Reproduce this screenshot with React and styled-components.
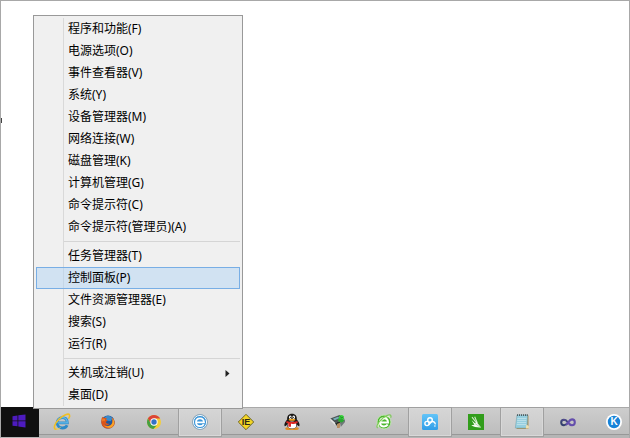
import React from "react";
import styled, { createGlobalStyle } from "styled-components";

const GlobalStyle = createGlobalStyle`
  * { box-sizing: border-box; }
  body { margin: 0; background: #fff; }
  button { font: inherit; color: inherit; cursor: default; }
`;

const Screen = styled.div`
  position: relative;
  display: flex;
  flex-direction: column;
  min-height: 100vh;
  border: 1px solid #a8a8a8;
  border-bottom: 0;
  background: #fff;
  color: #000;
  font: 12px/20px "Noto Sans", "Noto Sans CJK SC", sans-serif;
  overflow: hidden;
`;

const Desktop = styled.main`
  flex: 1;
`;

const EdgeMark = styled.span`
  position: absolute;
  left: -1px;
  top: 117px;
  width: 2px;
  height: 5px;
  background: #444;
`;

const Menu = styled.nav`
  position: absolute;
  left: 32px;
  bottom: 29px;
  width: 210px;
  padding: 2px;
  border: 1px solid #999;
  background: linear-gradient(#d9d9d9, #d9d9d9) 29px 2px / 1px calc(100% - 4px) no-repeat #f0f0f0;
`;

const MenuItem = styled.button`
  display: flex;
  align-items: center;
  justify-content: space-between;
  width: 100%;
  height: 22px;
  padding: 0 8px 0 31px;
  border: 1px solid ${(p) => (p.$active ? "#78aee5" : "transparent")};
  background: ${(p) => (p.$active ? "rgba(178, 212, 243, 0.5)" : "transparent")};
  text-align: left;
  white-space: nowrap;
`;

const Separator = styled.hr`
  height: 1px;
  margin: 3px 0 3px 28px;
  border: 0;
  background: #d5d5d5;
`;

const Taskbar = styled.footer`
  display: flex;
  height: 31px;
  background: linear-gradient(#a9a9a9 0 1px, #cdcdcd 1px, #bdbdbd 27px, #989898 27px 28px, #b5b5b5 28px);
`;

const StartButton = styled.button`
  display: grid;
  place-items: center;
  flex: 0 0 38px;
  height: 30px;
  padding: 0 2px 2px 0;
  border: 0;
  background: #101010;
`;

const TaskList = styled.div`
  display: flex;
  flex: 1;
  padding-left: 1px;
  gap: 2px;
`;

const TaskButton = styled.button`
  display: grid;
  place-items: center;
  flex: 0 0 44px;
  height: 30px;
  padding: 0;
  border: 1px solid ${(p) => (p.$running ? "#a0a0a0" : "transparent")};
  background: ${(p) => (p.$running ? "linear-gradient(#d6d6d6, #c9c9c9)" : "transparent")};
  box-shadow: ${(p) => (p.$running ? "inset 0 0 0 1px #d8d8d8" : "none")};
`;

const Icon = styled.svg`
  display: block;
  width: ${(p) => p.$size || 16}px;
  height: ${(p) => p.$size || 16}px;
  overflow: visible;
`;

const WindowsIcon = () => (
  <Icon $size={14} viewBox="0 0 14 14" fill="#4d1bbf">
    <path d="M.5 2.2 5.5 1.5V6.5H.5zM6.3 1.3 13.5 .4V6.5H6.3zM.5 7.3H5.5V12.3L.5 11.7zM6.3 7.3H13.5V13.6L6.3 12.6z" />
  </Icon>
);

const ExplorerIcon = () => (
  <Icon viewBox="0 0 16 16" fill="none">
    <path d="M3.2 8.8H13.3C13.2 5.7 11.3 3.7 8.5 3.7C5.4 3.7 3.1 5.9 3.1 8.8C3.1 11.8 5.4 14 8.5 14C10.8 14 12.5 12.9 13.1 11.3" stroke="#2c8ac9" strokeWidth="2.8" />
    <path d="M4 8.8H13.3C13.2 5.7 11.3 3.7 8.5 3.7C5.4 3.7 3.1 5.9 3.1 8.8" stroke="#62baea" strokeWidth="1.3" />
    <path d="M2.2 15.3C-1.3 15.2.5 9.4 5.2 5C9.5 .9 14.6-1 15.5 1C15.9 1.9 15.4 3.4 14.9 4.2" stroke="#f0bf22" strokeWidth="1.6" strokeLinecap="round" />
    <path d="M2.2 15.3C4 15.3 5.6 14.2 6.5 13.5" stroke="#f5cf45" strokeWidth="1" />
  </Icon>
);

const FirefoxIcon = () => (
  <Icon $size={14} viewBox="0 0 16 16">
    <circle cx="8" cy="8" r="7.5" fill="#20599e" />
    <path d="M4 3C6 0 11 0 13 4L11 7L5 6z" fill="#3b8ccc" />
    <path d="M1.6 2C2 3 3 3.2 4 3.4C5 3 6 3.3 6.6 3.9L5.8 5.3L7.7 6.3L5.6 7.8C5.4 9.5 7.4 10.5 9.6 9.6C9 12.3 5 12 4.2 9.8C4.8 13.3 11.8 13.8 12.8 8.7C13.2 6.7 12.8 4.2 12 2.5C14.6 4 16 6.7 15.6 10C14.2 17.2 1.8 17.5.4 9C0 6.3.5 3.8 1.6 2z" fill="#dc5419" />
    <path d="M13 3.3C15.8 6.5 15.9 11 12.7 13.6C9.4 15.8 5 14.3 2.6 11.5C6.5 14 12.3 13 13.1 8.7C13.4 7 13.4 5 13 3.3z" fill="#f8a528" />
    <path d="M1.3 4.5C3 3.7 4.4 4.3 4.8 5.3L4 7.3C3.4 6.3 2 6.5 1 8z" fill="#ed7b24" />
  </Icon>
);

const ChromeIcon = () => (
  <Icon $size={14} viewBox="0 0 16 16">
    <circle cx="8" cy="8" r="8" fill="#f4ce38" />
    <path d="M8 0C11 0 13.6 1.6 15 4H8L4.5 9.7L1 4C2.4 1.6 5 0 8 0z" fill="#db4437" />
    <path d="M1 4L4.5 10L8 12H11L7.3 16C3.2 15.7 0 12.2 0 8C0 6.5.4 5.2 1 4z" fill="#459f42" />
    <circle cx="8" cy="8" r="4.2" fill="#fff" />
    <circle cx="8" cy="8" r="3.1" fill="#3471c4" />
  </Icon>
);

const BrowserIcon = () => (
  <Icon viewBox="0 0 16 16" fill="none">
    <circle cx="8" cy="8" r="7.5" fill="#3c96d8" stroke="#91a8b8" />
    <circle cx="8" cy="8" r="6.6" stroke="#f3f7fa" strokeWidth="1" />
    <path d="M4.2 8.4H12C11.8 6 10.2 4.4 8 4.4C5.6 4.4 4 6.1 4 8.3C4 10.6 5.7 12.2 8 12.2C9.8 12.2 11.1 11.4 11.7 10.1" stroke="#fff" strokeWidth="1.8" />
  </Icon>
);

const IETesterIcon = () => (
  <Icon viewBox="0 0 16 16">
    <path d="M8 .3 15.7 8 8 15.7.3 8z" fill="#f4d526" stroke="#6d6425" strokeWidth="1" strokeLinejoin="round" />
    <text x="8" y="11" textAnchor="middle" fontFamily="Liberation Sans, sans-serif" fontWeight="700" fontSize="9" fill="#2a2817">IE</text>
  </Icon>
);

const PenguinIcon = () => (
  <Icon viewBox="0 0 16 16">
    <ellipse cx="5" cy="14.5" rx="3.8" ry="1.6" fill="#df8e25" />
    <ellipse cx="11" cy="14.5" rx="3.8" ry="1.6" fill="#df8e25" />
    <path d="M3.2 5.6C2.8 2 4.7-.2 8-.2S13.2 2 12.8 5.6C14.7 7.5 16.3 11 15.2 12.3C14.4 12.4 13.6 11.3 13.2 10.8C12.8 13.5 11 14.7 8 14.7S3.2 13.5 2.8 10.8C2.4 11.3 1.6 12.4.8 12.3C-.3 11 1.3 7.5 3.2 5.6z" fill="#191715" />
    <ellipse cx="8" cy="11" rx="4.4" ry="3.5" fill="#fff" />
    <ellipse cx="6.3" cy="3.2" rx="1.3" ry="1.7" fill="#fff" />
    <ellipse cx="9.7" cy="3.2" rx="1.3" ry="1.7" fill="#fff" />
    <circle cx="6.8" cy="3.4" r=".6" /><circle cx="9.2" cy="3.4" r=".6" />
    <ellipse cx="8" cy="5.8" rx="3.3" ry="1" fill="#f2a51e" />
    <path d="M2.6 6.9C6 8.4 10 8.4 13.4 6.9L13.8 8.9C10.7 10 8.5 10 7 9.8V12.8H4.3V9.4L2.2 8.8z" fill="#dd2824" />
  </Icon>
);

const ToolIcon = () => (
  <Icon viewBox="0 0 16 16">
    <path d="M.3 4.5 9.5 1 14.5 5 5 9z" fill="#4b5355" />
    <path d="M.3 4.5 5 8.8V11L.7 6.7z" fill="#e4e6e4" />
    <path d="M2.8 4.8 8 2.8 9.5 4 4.8 6.3z" fill="#79afb9" />
    <path d="M5 9 10 7 11 9 7 12z" fill="#222b26" />
    <path d="M7 10 10.5 8.5 9.7 14 7 14z" fill="#b88e61" />
    <path d="M10 8 15 5.2V8L10.8 13z" fill="#707979" />
    <circle cx="11.4" cy="3.6" r="2.5" fill="#38d33b" />
    <path d="M7.4 5.5C9 3.8 13 4.4 14.4 6.5L12 8.6 9 7.7z" fill="#2ba832" />
    <path d="M10.2 2.6 11.7 4 13 2.7" fill="none" stroke="#116b20" strokeWidth=".8" />
  </Icon>
);

const GreenBrowserIcon = () => (
  <Icon viewBox="0 0 16 16" fill="none">
    <circle cx="8" cy="8" r="7" fill="#4cb72e" stroke="#c4e6b5" />
    <path d="M3.8 8.4H12C11.9 5.9 10.3 4.3 8 4.3S4 6 4 8.4S5.7 12.4 8 12.4C9.7 12.4 11 11.8 11.7 10.5" stroke="#fff" strokeWidth="2" />
    <path d="M1.8 13.8C-1.2 13.6 4.1 4.5 11 1.5C14-.1 15.9 1.1 14.7 3.8" stroke="#7ccc55" strokeWidth="1.2" />
    <path d="M2.4 12.7C1 11.8 5.5 5.5 11.4 2.8C13 2.1 13.8 2.6 13.2 4" stroke="#effbdf" strokeWidth=".9" />
  </Icon>
);

const CloudIcon = () => (
  <Icon viewBox="0 0 16 16" fill="none">
    <defs><linearGradient id="cloud" x2="0" y2="1"><stop stopColor="#62c4f8" /><stop offset="1" stopColor="#329ee8" /></linearGradient></defs>
    <rect width="16" height="16" rx="1.5" fill="url(#cloud)" />
    <circle cx="5" cy="9.5" r="2.1" stroke="#fff" strokeWidth="1.4" />
    <circle cx="8" cy="6" r="2.3" stroke="#fff" strokeWidth="1.4" />
    <path d="M6.7 10.8 9.8 7.5C12.2 7.3 13.4 8.6 13.2 10.3" stroke="#fff" strokeWidth="1.4" />
    <circle cx="12.9" cy="12" r=".8" fill="#fff" />
  </Icon>
);

const BrushIcon = () => (
  <Icon viewBox="0 0 16 16" fill="none">
    <rect width="16" height="16" fill="#319d1b" />
    <path d="M4 3.2 8.6 9M6.7 2.8 9.3 9" stroke="#d6ebcd" strokeWidth="1.1" />
    <path d="M3.6 6.2 7 9.2 8.5 8 13.2 13.4C9.6 13.8 6 12.8 3.2 11.2L6.4 10.8z" fill="#f3faef" />
    <path d="M7 9.5 12.3 13.2" stroke="#7bbc69" strokeWidth=".5" />
  </Icon>
);

const NotepadIcon = () => (
  <Icon viewBox="0 0 16 16" fill="none">
    <path d="M4 1.5H14.5V15H2.5z" fill="#a9935f" />
    <path d="M3 1H13.6L13 14H1.3z" fill="#96cfdf" stroke="#6f9ca9" strokeWidth=".5" />
    <path d="M3.4 4.5H12.5M3.2 6.5H12.3M3 8.5H12.2M2.8 10.5H12" stroke="#c1e3eb" strokeWidth=".8" />
    <path d="M3.5 2V.2M5.5 2V.2M7.5 2V.2M9.5 2V.2M11.5 2V.2M13.3 2V.2" stroke="#485457" strokeWidth=".9" />
    <path d="M12.3 10.5 14.8 12V14.5H11.8z" fill="#efe0b0" />
  </Icon>
);

const InfinityIcon = () => (
  <Icon viewBox="0 0 16 16" fill="none">
    <path d="M8 8.5C6.8 6.8 5.7 5.8 4 5.8C2.2 5.8 1.2 6.9 1.2 8.5S2.2 11.2 4 11.2C5.7 11.2 6.8 10.2 8 8.5" stroke="#34406f" strokeWidth="2" />
    <path d="M6 10.7C8 9.8 9 5.4 12 5.4C13.8 5.4 14.8 6.6 14.8 8.3S13.8 11.3 12 11.3C10 11.3 9 9.8 8 8.5" stroke="#644eac" strokeWidth="2.1" />
    <path d="M1.6 6.7C2.4 5.6 5 5.1 6.5 7" stroke="#6550a2" strokeWidth="1" />
  </Icon>
);

const KIcon = () => (
  <Icon viewBox="0 0 16 16">
    <circle cx="8" cy="8" r="8" fill="#fff" />
    <circle cx="8" cy="8" r="6.2" fill="#1783d8" />
    <text x="8" y="11.3" textAnchor="middle" fontFamily="Liberation Sans, sans-serif" fontWeight="700" fontSize="10" fill="#fff">K</text>
  </Icon>
);

const ArrowIcon = () => (
  <Icon $size={7} viewBox="0 0 7 7"><path d="M1.5 0 5.5 3.5 1.5 7z" fill="#222" /></Icon>
);

const groups = [
  ["程序和功能(F)", "电源选项(O)", "事件查看器(V)", "系统(Y)", "设备管理器(M)", "网络连接(W)", "磁盘管理(K)", "计算机管理(G)", "命令提示符(C)", "命令提示符(管理员)(A)"],
  ["任务管理器(T)", "控制面板(P)", "文件资源管理器(E)", "搜索(S)", "运行(R)"],
  ["关机或注销(U)", "桌面(D)"],
];

const tasks = [
  ["Internet Explorer", ExplorerIcon],
  ["Firefox", FirefoxIcon],
  ["Chrome", ChromeIcon],
  ["Browser", BrowserIcon, true],
  ["IETester", IETesterIcon],
  ["QQ", PenguinIcon],
  ["Tools", ToolIcon],
  ["Secure Browser", GreenBrowserIcon],
  ["Cloud", CloudIcon, true],
  ["Editor", BrushIcon],
  ["Notepad", NotepadIcon, true],
  ["Visual Studio", InfinityIcon],
  ["Music", KIcon],
];

export default function App() {
  return (
    <Screen>
      <GlobalStyle />
      <Desktop />
      <EdgeMark />
      <Taskbar>
        <StartButton aria-label="Start"><WindowsIcon /></StartButton>
        <TaskList>
          {tasks.map(([name, Glyph, running]) => (
            <TaskButton key={name} aria-label={name} $running={running}><Glyph /></TaskButton>
          ))}
        </TaskList>
      </Taskbar>
      <Menu>
        {groups.map((items, i) => (
          <React.Fragment key={items[0]}>
            {i > 0 && <Separator />}
            {items.map((label) => (
              <MenuItem key={label} $active={label === "控制面板(P)"}>
                {label}
                {label === "关机或注销(U)" && <ArrowIcon />}
              </MenuItem>
            ))}
          </React.Fragment>
        ))}
      </Menu>
    </Screen>
  );
}
